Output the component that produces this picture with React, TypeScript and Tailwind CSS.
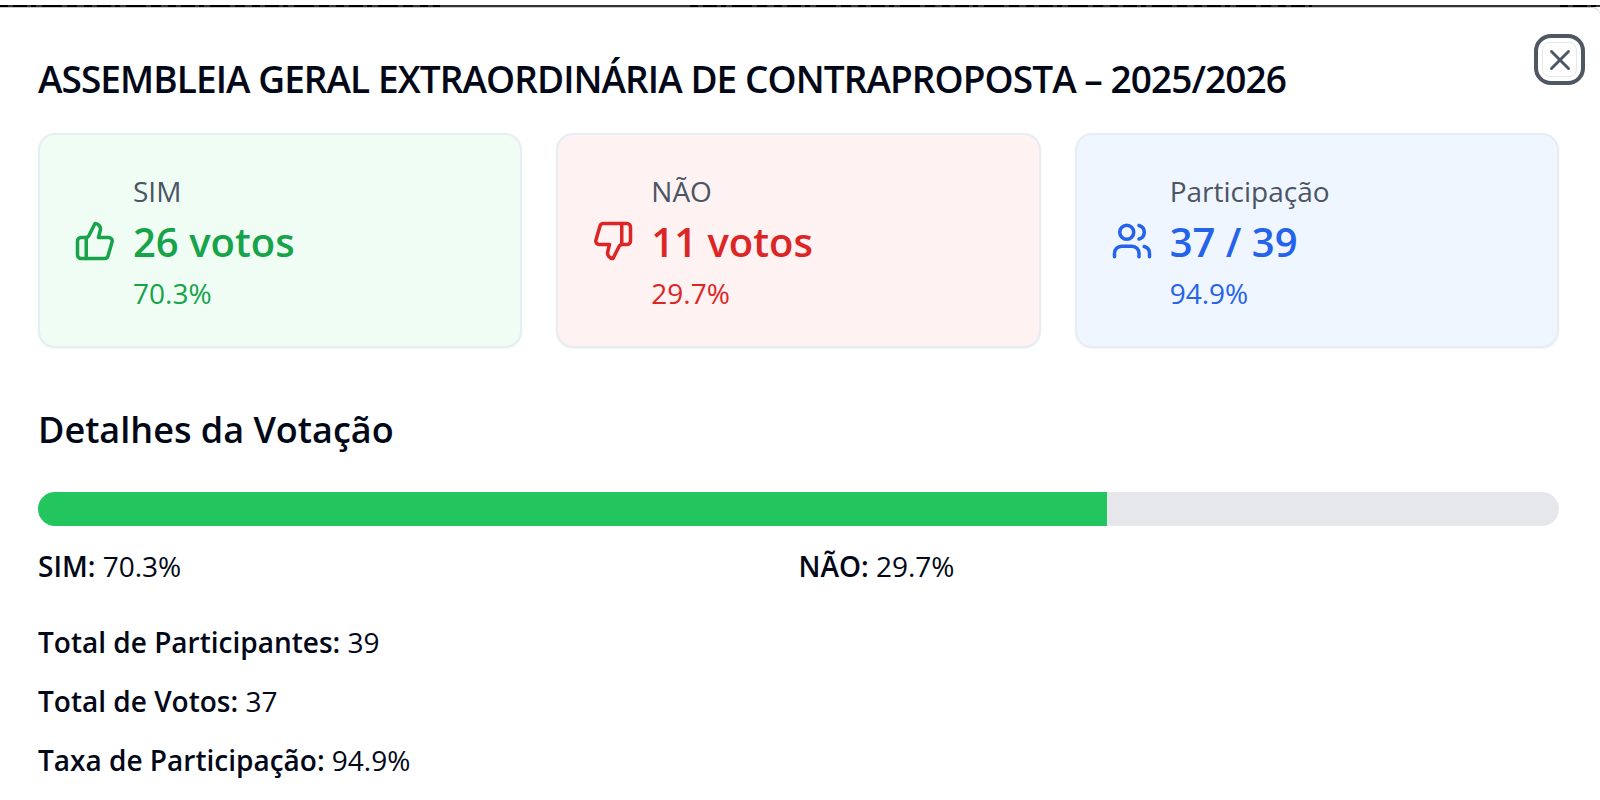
import { ThumbsUp, ThumbsDown, Users, X, type LucideIcon } from "lucide-react";

const stats: {
  label: string;
  value: string;
  percent: string;
  Icon: LucideIcon;
  card: string;
  tone: string;
}[] = [
  { label: "SIM", value: "26 votos", percent: "70.3%", Icon: ThumbsUp, card: "bg-[#f0fdf4]", tone: "text-[#16a34a]" },
  { label: "NÃO", value: "11 votos", percent: "29.7%", Icon: ThumbsDown, card: "bg-[#fef2f2]", tone: "text-[#dc2626]" },
  { label: "Participação", value: "37 / 39", percent: "94.9%", Icon: Users, card: "bg-[#eff6ff]", tone: "text-[#2563eb]" },
];

const totals = [
  { label: "Total de Participantes:", value: "39" },
  { label: "Total de Votos:", value: "37" },
  { label: "Taxa de Participação:", value: "94.9%" },
];

const yesShare = 70.3;

/* Sliver of the dimmed page left visible above the dialog. */
function DimmedPage() {
  return (
    <svg aria-hidden="true" className="block h-[2px] w-full bg-[#333333]" viewBox="0 0 1600 2" preserveAspectRatio="none">
      <g stroke="#000000" strokeWidth="2" strokeDasharray="8 5 14 4 5 6 20 5 10 7">
        <path d="M0 1H440" />
        <path d="M690 1H1312" />
        <path d="M1560 1H1600" />
      </g>
    </svg>
  );
}

export default function App() {
  return (
    <div className="min-h-screen bg-white pt-[5px] font-['Open_Sans','Noto_Sans',sans-serif] text-[#020817]">
      <DimmedPage />
      <div
        role="dialog"
        aria-labelledby="title"
        className="relative rounded-tr-[8px] border-t border-[#c3c8d0] pt-[47px] pr-[41px] pb-4 pl-[38px]"
      >
        <button
          type="button"
          aria-label="Fechar"
          className="absolute top-[26px] right-[15px] flex size-[51px] items-center justify-center rounded-[17px] border-4 border-[#4f5763] bg-white text-[#4b5563]"
        >
          <span className="flex size-[35px] items-center justify-center rounded-[8px] border border-[#e5e7eb]">
            <X size={34} strokeWidth={2} className="shrink-0" />
          </span>
        </button>

        <h2 id="title" className="text-[37px] leading-[48px] font-semibold tracking-tight">
          ASSEMBLEIA GERAL EXTRAORDINÁRIA DE CONTRAPROPOSTA – 2025/2026
        </h2>

        <div className="mt-[30px] grid grid-cols-3 gap-[34px]">
          {stats.map(({ label, value, percent, Icon, card, tone }) => (
            <div
              key={label}
              className={`flex h-[215px] items-center gap-[17px] rounded-[17px] border-2 border-[#e6edf3] px-[34px] shadow-xs ${card}`}
            >
              <Icon size={42} strokeWidth={2} className={`shrink-0 ${tone}`} />
              <div className="pt-[2px]">
                <p className="text-[28px] leading-[42px] text-[#4b5563]">{label}</p>
                <p className={`text-[40px] leading-[60px] font-semibold ${tone}`}>{value}</p>
                <p className={`text-[28px] leading-[42px] ${tone}`}>{percent}</p>
              </div>
            </div>
          ))}
        </div>

        <h3 className="mt-[54px] text-[36px] leading-[56px] font-semibold">Detalhes da Votação</h3>

        <div className="mt-[34px] h-[34px] overflow-hidden rounded-full bg-[#e5e7eb]">
          <div className="h-full bg-[#22c55e]" style={{ width: `${yesShare}%` }} />
        </div>

        <div className="mt-[19px] grid grid-cols-2 text-[28px] leading-[42px]">
          <p>
            <strong className="font-semibold">SIM:</strong> 70.3%
          </p>
          <p>
            <strong className="font-semibold">NÃO:</strong> 29.7%
          </p>
        </div>

        <div className="mt-[34px] flex flex-col gap-[17px] text-[28px] leading-[42px]">
          {totals.map(({ label, value }) => (
            <p key={label}>
              <strong className="font-semibold">{label}</strong> {value}
            </p>
          ))}
        </div>
      </div>
    </div>
  );
}
